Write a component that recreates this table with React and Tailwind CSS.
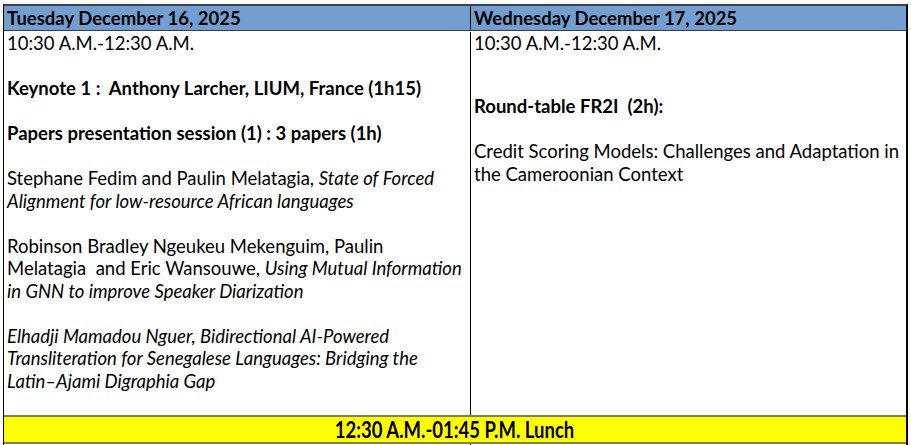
import React from "react";

const Blank = () => <div className="h-[22.5px]" />;

const App = () => {
  return (
    <div className="w-[911px] h-[445px] bg-white overflow-hidden pt-[4px] pl-[3px] font-['Lato',sans-serif] text-[18.5px] leading-[22.5px] text-black">
      <div className="w-[905px] border-t-2 border-t-[#38424f] border-l border-l-black border-r-2 border-r-black">
        {/* day headers */}
        <div className="grid grid-cols-[467px_1fr] h-[25px] bg-[#729fcf] border-b border-b-[#3a3a3a] font-bold">
          <div className="pl-[3px] leading-[24px] border-r border-r-black">Tuesday December 16, 2025</div>
          <div className="pl-[3px] leading-[24px]">Wednesday December 17, 2025</div>
        </div>

        {/* sessions */}
        <div className="grid grid-cols-[467px_1fr] h-[384px] pt-[1px]">
          <div className="pl-[3px] pr-1 border-r border-r-black">
            <p>10:30 A.M.-12:30 A.M.</p>
            <Blank />
            <p className="font-bold">Keynote 1 :&nbsp; Anthony Larcher, LIUM, France (1h15)</p>
            <Blank />
            <p className="font-bold">Papers presentation session (1) : 3 papers (1h)</p>
            <Blank />
            <p>
              Stephane Fedim and Paulin Melatagia, <i>State of Forced Alignment for low-resource African languages</i>
            </p>
            <Blank />
            <p>
              Robinson Bradley Ngeukeu Mekenguim, Paulin Melatagia&nbsp; and Eric Wansouwe,{" "}
              <i>Using Mutual Information in GNN to improve Speaker Diarization</i>
            </p>
            <Blank />
            <p className="italic">
              Elhadji Mamadou Nguer, Bidirectional AI-Powered Transliteration for Senegalese Languages: Bridging the
              Latin–Ajami Digraphia Gap
            </p>
          </div>
          <div className="pl-[3px] pr-1">
            <p>10:30 A.M.-12:30 A.M.</p>
            <p className="font-bold mt-[40px]">Round-table FR2I&nbsp; (2h):</p>
            <p className="mt-[23px]">Credit Scoring Models: Challenges and Adaptation in the Cameroonian Context</p>
          </div>
        </div>

        {/* lunch */}
        <div className="h-[29px] bg-[#ffff00] border-y-2 border-y-[#7f7f58] flex items-center justify-center">
          <span className="font-bold text-[22px] scale-x-[0.84] leading-none">12:30 A.M.-01:45 P.M. Lunch</span>
        </div>
        <div className="grid grid-cols-[467px_1fr] h-[10px]">
          <div className="border-r border-r-black" />
          <div />
        </div>
      </div>
    </div>
  );
};

export default App;
